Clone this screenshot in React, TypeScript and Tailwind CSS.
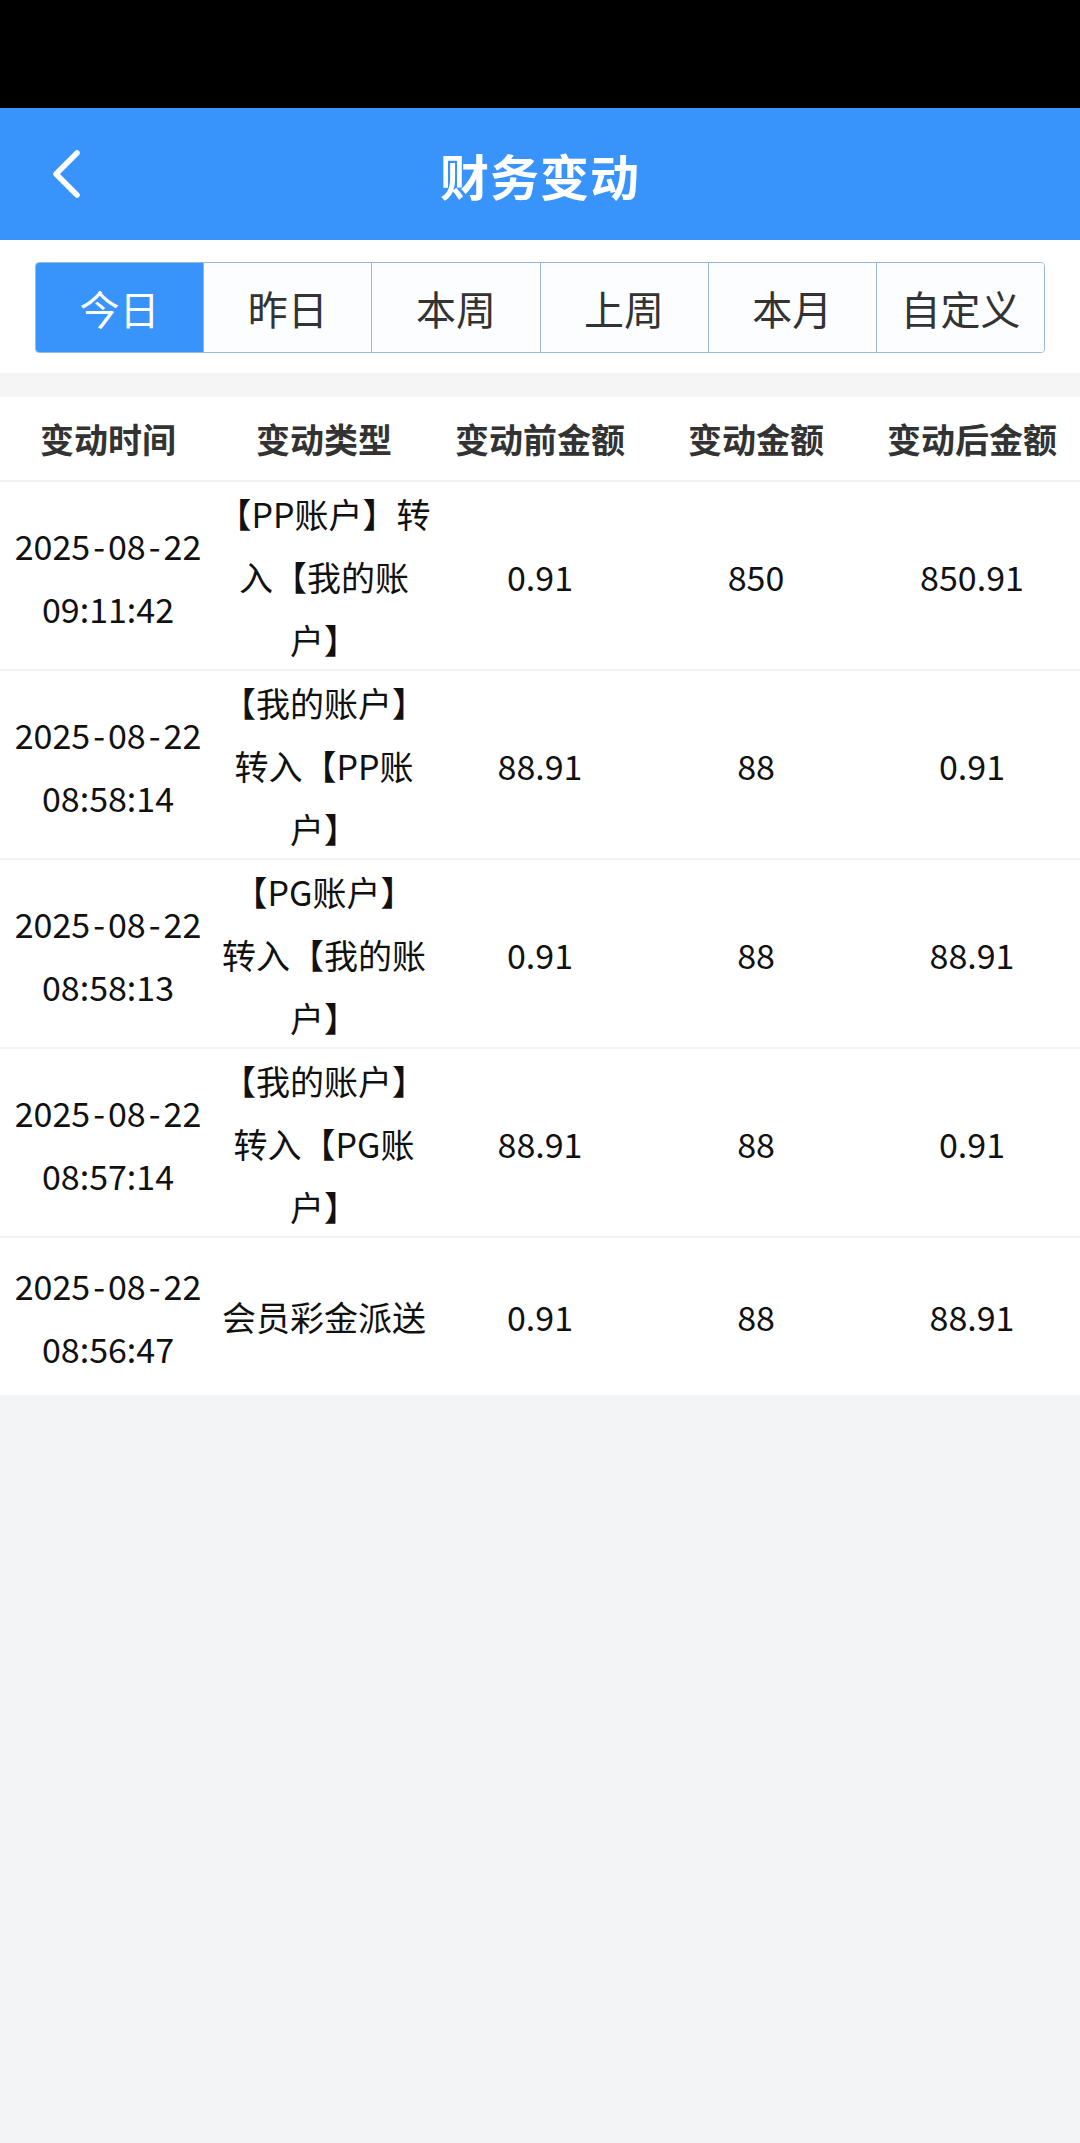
const tabs = ["今日", "昨日", "本周", "上周", "本月", "自定义"];

const columns = ["变动时间", "变动类型", "变动前金额", "变动金额", "变动后金额"];

interface Record {
  date: string;
  time: string;
  type: string[];
  before: string;
  amount: string;
  after: string;
}

const records: Record[] = [
  {
    date: "2025-08-22",
    time: "09:11:42",
    type: ["【PP账户】转", "入【我的账", "户】"],
    before: "0.91",
    amount: "850",
    after: "850.91",
  },
  {
    date: "2025-08-22",
    time: "08:58:14",
    type: ["【我的账户】", "转入【PP账", "户】"],
    before: "88.91",
    amount: "88",
    after: "0.91",
  },
  {
    date: "2025-08-22",
    time: "08:58:13",
    type: ["【PG账户】", "转入【我的账", "户】"],
    before: "0.91",
    amount: "88",
    after: "88.91",
  },
  {
    date: "2025-08-22",
    time: "08:57:14",
    type: ["【我的账户】", "转入【PG账", "户】"],
    before: "88.91",
    amount: "88",
    after: "0.91",
  },
  {
    date: "2025-08-22",
    time: "08:56:47",
    type: ["会员彩金派送"],
    before: "0.91",
    amount: "88",
    after: "88.91",
  },
];

// the hyphens in the date are drawn a bit wider than the font's own
const DateText = ({ value }: { value: string }) => {
  const parts = value.split("-");
  return (
    <div>
      {parts.map((p, i) => (
        <span key={i}>
          {i > 0 && <span className="mx-[3px]">-</span>}
          {p}
        </span>
      ))}
    </div>
  );
};

const App = () => {
  return (
    <div className="min-h-[2143px] bg-[#f3f4f6] font-['Noto_Sans_CJK_SC','Noto_Sans',sans-serif]">
      {/* Status bar */}
      <div className="h-[108px] bg-black" />

      {/* Nav bar */}
      <div className="h-[132px] bg-[#3894fa] grid grid-cols-[1fr_auto_1fr] items-center">
        <button className="justify-self-start pl-[50px] flex items-center">
          <svg width="32" height="50" viewBox="0 0 32 50" fill="none">
            <polyline
              points="27,4 6,25 27,46"
              stroke="white"
              strokeWidth="5.5"
              strokeLinecap="round"
              strokeLinejoin="round"
            />
          </svg>
        </button>
        <h1 className="text-[49px] font-bold text-white leading-none tracking-[1px]">财务变动</h1>
        <div />
      </div>

      {/* Date tabs */}
      <div className="bg-white px-[35px] pt-[22px] pb-[20px]">
        <div className="flex h-[91px] w-[1010px] border border-[#9bb8d6] rounded-[4px] overflow-hidden">
          {tabs.map((tab, i) => (
            <div
              key={tab}
              className={`flex-1 flex items-center justify-center text-[40px] ${
                i === 0
                  ? "bg-[#3894fa] text-white"
                  : "bg-[#fbfdff] text-[#333] border-l border-[#9bb8d6]"
              }`}
            >
              {tab}
            </div>
          ))}
        </div>
      </div>

      <div className="h-[24px] bg-[#f5f5f5]" />

      {/* Table */}
      <div className="bg-white">
        <div className="grid grid-cols-5 h-[85px] items-center border-b-2 border-[#f2f2f2]">
          {columns.map((col) => (
            <div key={col} className="text-center text-[34px] font-bold text-[#333]">
              {col}
            </div>
          ))}
        </div>

        {records.map((r, i) => (
          <div
            key={r.time}
            className={`grid grid-cols-5 items-center text-[34px] leading-[63px] text-[#111] ${
              i === records.length - 1 ? "h-[157px]" : "h-[189px] border-b-2 border-[#f2f2f2]"
            }`}
          >
            <div className="text-center whitespace-nowrap">
              <DateText value={r.date} />
              <div>{r.time}</div>
            </div>
            <div className="text-center whitespace-nowrap">
              {r.type.map((line) => (
                <div key={line}>{line}</div>
              ))}
            </div>
            <div className="text-center">{r.before}</div>
            <div className="text-center">{r.amount}</div>
            <div className="text-center">{r.after}</div>
          </div>
        ))}
      </div>
    </div>
  );
};

export default App;
